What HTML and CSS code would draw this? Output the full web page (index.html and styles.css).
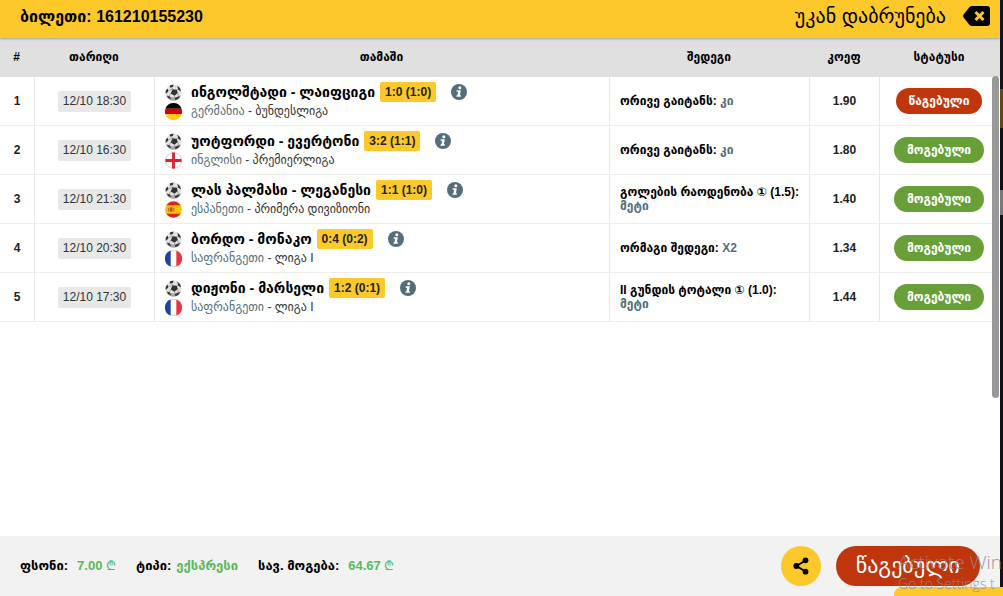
FILE: index.html
```html
<!DOCTYPE html>
<html lang="ka">
<head>
    <meta charset="UTF-8">
    <meta name="viewport" content="width=device-width, initial-scale=1.0">
    <title>ბილეთი: 161210155230</title>
    <link rel="stylesheet" href="styles.css">
</head>
<body>
    <!-- Shared icons -->
    <svg class="sprite" aria-hidden="true">
        <symbol id="ball" viewBox="0 0 18 18">
            <circle cx="9" cy="9" r="8.5" fill="#e2e2e2"/>
            <path d="M1 12a8.500 8.500 0 0 0 16 0q-8 4.500-16 0z" fill="#a5a5a5"/>
            <path d="M8 5.500l4.500 .5 1 3.500-3.500 3-4-2.500zM5 1.500l4-1L8.500 3 5.500 4zM13 1.500l3 3 1 3.500-3-2zM.8 6.500L3 5l.5 3L.7 10.500zM2 12.500l3 .5 1.500 3.500Q3 15.500 2 12.500zM10.500 15l3-1.500 2.500-.5Q14 16.800 11 17.300z" fill="#333"/>
            <path d="M8 5.500L7 3.500M12.500 6L14 6M13.500 9.500l.5 4M10 12.500l.5 2.500M6 10L4.500 13M3.500 7L8 5.500" stroke="#777" stroke-width=".6"/>
        </symbol>
        <symbol id="flag-de" viewBox="0 0 18 18">
            <path d="M.5 6a9 9 0 0 1 17 0z" fill="#000"/>
            <path d="M.5 6h17a9 9 0 0 1 0 6H.5a9 9 0 0 1 0-6z" fill="#d80000"/>
            <path d="M.5 12h17a9 9 0 0 1-17 0z" fill="#ffce00"/>
        </symbol>
        <symbol id="flag-en" viewBox="0 0 18 18">
            <circle cx="9" cy="9" r="8.500" fill="#fff" stroke="#ccc"/>
            <path d="M7.500 .5h3v7h7v3h-7v7h-3v-7h-7v-3h7z" fill="#e0202c"/>
        </symbol>
        <symbol id="flag-es" viewBox="0 0 18 18">
            <circle cx="9" cy="9" r="9" fill="#ffc400"/>
            <path d="M1.500 4.500a9 9 0 0 1 15 0zM1.500 13.500a9 9 0 0 0 15 0z" fill="#d8232a"/>
            <path d="M3 7h1v4H3zM5 6.500h3V11q-1.500 1-3 0zM9 7h1v4H9z" fill="#b5542a"/>
        </symbol>
        <symbol id="flag-fr" viewBox="0 0 18 18">
            <circle cx="9" cy="9" r="8.500" fill="#fff" stroke="#ccc"/>
            <path d="M6 .5a9 9 0 0 0 0 17z" fill="#1c4699"/>
            <path d="M12 .5a9 9 0 0 1 0 17z" fill="#e8343f"/>
        </symbol>
        <symbol id="info" viewBox="0 0 16 16">
            <circle cx="8" cy="8" r="8" fill="#546e7a"/>
            <circle cx="8.800" cy="3.800" r="1.500" fill="#fff"/>
            <path d="M5.800 6.200h4L8.900 11.200h1.100L9.700 12.700H5.400l.3-1.500h.8L7.100 7.700H5.500z" fill="#fff"/>
        </symbol>
    </svg>

    <main class="ticket">
        <header class="topbar">
            <h1>ბილეთი: 161210155230</h1>
            <button type="button" class="back">
                უკან დაბრუნება
                <svg width="27" height="20" viewBox="0 0 27 20" aria-hidden="true">
                    <path d="M9 0h15q3 0 3 3v14q0 3-3 3H9q-1.500 0-2.500-1L.6 11.500Q-.3 10 .6 8.500L6.500 1Q7.500 0 9 0z" fill="#000"/>
                    <path d="M12.500 6l8 8M20.500 6l-8 8" stroke="#fdc82a" stroke-width="3"/>
                </svg>
            </button>
        </header>

        <div class="games">
            <table>
                <thead>
                    <tr>
                        <th class="col-num">#</th>
                        <th class="col-date">თარიღი</th>
                        <th>თამაში</th>
                        <th class="col-result">შედეგი</th>
                        <th class="col-coef">კოეფ</th>
                        <th class="col-status">სტატუსი</th>
                    </tr>
                </thead>
                <tbody>
                    <tr>
                        <td class="num">1</td>
                        <td class="date"><span>12/10 18:30</span></td>
                        <td class="game">
                            <div class="teams"><svg class="icon"><use href="#ball"/></svg><b>ინგოლშტადი - ლაიფციგი</b><span class="score">1:0 (1:0)</span><button type="button" class="info" aria-label="info"><svg><use href="#info"/></svg></button></div>
                            <div class="league"><svg class="icon"><use href="#flag-de"/></svg><span><a href="#">გერმანია</a> - ბუნდესლიგა</span></div>
                        </td>
                        <td class="result">ორივე გაიტანს: <span>კი</span></td>
                        <td class="coef">1.90</td>
                        <td class="status"><span class="pill lost">წაგებული</span></td>
                    </tr>
                    <tr>
                        <td class="num">2</td>
                        <td class="date"><span>12/10 16:30</span></td>
                        <td class="game">
                            <div class="teams"><svg class="icon"><use href="#ball"/></svg><b>უოტფორდი - ევერტონი</b><span class="score">3:2 (1:1)</span><button type="button" class="info" aria-label="info"><svg><use href="#info"/></svg></button></div>
                            <div class="league"><svg class="icon"><use href="#flag-en"/></svg><span><a href="#">ინგლისი</a> - პრემიერლიგა</span></div>
                        </td>
                        <td class="result">ორივე გაიტანს: <span>კი</span></td>
                        <td class="coef">1.80</td>
                        <td class="status"><span class="pill">მოგებული</span></td>
                    </tr>
                    <tr>
                        <td class="num">3</td>
                        <td class="date"><span>12/10 21:30</span></td>
                        <td class="game">
                            <div class="teams"><svg class="icon"><use href="#ball"/></svg><b>ლას პალმასი - ლეგანესი</b><span class="score">1:1 (1:0)</span><button type="button" class="info" aria-label="info"><svg><use href="#info"/></svg></button></div>
                            <div class="league"><svg class="icon"><use href="#flag-es"/></svg><span><a href="#">ესპანეთი</a> - პრიმერა დივიზიონი</span></div>
                        </td>
                        <td class="result">გოლების რაოდენობა ① (1.5): <span>მეტი</span></td>
                        <td class="coef">1.40</td>
                        <td class="status"><span class="pill">მოგებული</span></td>
                    </tr>
                    <tr>
                        <td class="num">4</td>
                        <td class="date"><span>12/10 20:30</span></td>
                        <td class="game">
                            <div class="teams"><svg class="icon"><use href="#ball"/></svg><b>ბორდო - მონაკო</b><span class="score">0:4 (0:2)</span><button type="button" class="info" aria-label="info"><svg><use href="#info"/></svg></button></div>
                            <div class="league"><svg class="icon"><use href="#flag-fr"/></svg><span><a href="#">საფრანგეთი</a> - ლიგა I</span></div>
                        </td>
                        <td class="result">ორმაგი შედეგი: <span>X2</span></td>
                        <td class="coef">1.34</td>
                        <td class="status"><span class="pill">მოგებული</span></td>
                    </tr>
                    <tr>
                        <td class="num">5</td>
                        <td class="date"><span>12/10 17:30</span></td>
                        <td class="game">
                            <div class="teams"><svg class="icon"><use href="#ball"/></svg><b>დიჟონი - მარსელი</b><span class="score">1:2 (0:1)</span><button type="button" class="info" aria-label="info"><svg><use href="#info"/></svg></button></div>
                            <div class="league"><svg class="icon"><use href="#flag-fr"/></svg><span><a href="#">საფრანგეთი</a> - ლიგა I</span></div>
                        </td>
                        <td class="result">II გუნდის ტოტალი ① (1.0): <span>მეტი</span></td>
                        <td class="coef">1.44</td>
                        <td class="status"><span class="pill">მოგებული</span></td>
                    </tr>
                </tbody>
            </table>
            <div class="scroll-thumb"></div>
        </div>

        <footer class="summary">
            <dl>
                <div><dt>ფსონი:</dt><dd class="money">7.00 <span>₾</span></dd></div>
                <div><dt>ტიპი:</dt><dd>ექსპრესი</dd></div>
                <div><dt>სავ. მოგება:</dt><dd class="money">64.67 <span>₾</span></dd></div>
            </dl>
            <button type="button" class="share" aria-label="share">
                <svg width="16" height="18" viewBox="0 0 16 18">
                    <path d="M12.500 3.500L3.500 9l9 5.500" fill="none" stroke="#000" stroke-width="2"/>
                    <circle cx="12.500" cy="3.300" r="2.900"/>
                    <circle cx="3.300" cy="9" r="2.900"/>
                    <circle cx="12.500" cy="14.700" r="2.900"/>
                </svg>
            </button>
            <span class="pill lost big">წაგებული</span>
        </footer>
    </main>

    <div class="chat-tab"></div>
    <div class="watermark">
        <div class="watermark-title">Activate Win</div>
        <div>Go to Settings t</div>
    </div>
</body>
</html>
```
FILE: styles.css
```css
* {
    box-sizing: border-box;
}

body {
    margin: 0;
    height: 100vh;
    padding-right: 3px;
    overflow: hidden;
    position: relative;
    /* page behind the dialog */
    background: linear-gradient(#14151a 89px, #5c4a10 89px, #5c4a10 128px, #101218 128px, #101218 190px, #77787a 190px, #77787a 215px, #101218 215px);
    font-family: "Liberation Sans", "DejaVu Sans", sans-serif;
    font-size: 12px;
    color: #000;
}

button {
    border: 0;
    padding: 0;
    background: none;
    font: inherit;
    color: inherit;
    cursor: pointer;
}

.sprite {
    display: none;
}

.ticket {
    display: flex;
    flex-direction: column;
    height: 100%;
    background: #fff;
}

.topbar {
    display: flex;
    justify-content: space-between;
    align-items: center;
    height: 38px;
    flex: none;
    padding: 0 10px 6px 20px;
    background: #fdc82a;
    box-shadow: 0 1px 2px rgba(0, 0, 0, 0.3);
    position: relative;
    z-index: 1;
}

.topbar h1 {
    margin: 0;
    font-size: 16px;
}

.back {
    display: flex;
    align-items: center;
    gap: 17px;
    font-size: 20px;
}

/* Games table */
.games {
    flex: 1;
    min-height: 0;
    position: relative;
}

table {
    width: 100%;
    table-layout: fixed;
    border-collapse: separate;
    border-spacing: 0;
}

th {
    height: 39px;
    padding: 0 2px 2px 0;
    background: #e0e0e0;
    font-size: 12px;
}

.col-num { width: 35px; }
.col-date { width: 120px; }
.col-result { width: 200px; }
.col-coef { width: 70px; }
.col-status { width: 120px; }

td {
    height: 49px;
    padding: 0;
    border-right: 1px solid #e8e8e8;
    border-bottom: 1px solid #eee;
    text-align: center;
}

td:last-child {
    border-right: 0;
}

.num,
.coef {
    font-weight: bold;
    color: #222;
}

.date span {
    display: inline-block;
    padding: 0 5px;
    border-radius: 2px;
    background: #e8e8e8;
    line-height: 21px;
    color: #333;
}

.game {
    padding-left: 10px;
    text-align: left;
}

.teams,
.league {
    display: flex;
    align-items: center;
}

.teams {
    height: 20px;
    font-size: 14px;
}

.league {
    height: 18px;
    color: #333;
}

.icon {
    width: 17px;
    height: 17px;
    margin-right: 9px;
}

.league a {
    color: #546e7a;
    text-decoration: none;
}

.score {
    margin: 0 15px 0 5px;
    padding: 0 5px;
    border-radius: 2px;
    background: #fdc82a;
    font-size: 12px;
    font-weight: bold;
    line-height: 20px;
    color: #222;
}

.info svg {
    display: block;
    width: 16px;
    height: 16px;
}

.result {
    padding: 0 10px;
    text-align: left;
    font-weight: bold;
    line-height: 14px;
}

.result span {
    color: #546e7a;
}

.status {
    padding-right: 2px;
}

.pill {
    display: inline-block;
    padding: 0 13px;
    border-radius: 20px;
    background: #689f38;
    font-weight: bold;
    line-height: 26px;
    color: #fff;
}

.lost {
    background: #bf360c;
}

.scroll-thumb {
    position: absolute;
    top: 38px;
    right: 1px;
    width: 7px;
    height: 322px;
    border-radius: 4px;
    background: #999;
}

/* Bottom bar */
.summary {
    display: flex;
    align-items: center;
    flex: none;
    height: 60px;
    padding: 0 20px;
    background: #f2f2f2;
}

dl {
    display: flex;
    gap: 20px;
    flex: 1;
    margin: 0;
    font-size: 13px;
    font-weight: bold;
    line-height: 16px;
}

dl div {
    display: flex;
    align-items: baseline;
    gap: 5px;
}

dd {
    margin: 0;
    color: #5cb860;
}

.money {
    padding-left: 4px;
}

.money span {
    font-weight: normal;
}

.share {
    display: flex;
    align-items: center;
    justify-content: center;
    width: 40px;
    height: 40px;
    margin-right: 15px;
    border-radius: 50%;
    background: #fdc82a;
}

.big {
    padding: 0 20px;
    font-size: 22px;
    font-weight: normal;
    line-height: 40px;
}

.chat-tab {
    position: absolute;
    right: 0;
    bottom: 0;
    width: 109px;
    height: 9px;
    border-top-left-radius: 8px;
    background: #fdc82a;
}

.watermark {
    position: absolute;
    right: 0;
    bottom: 2px;
    width: 105px;
    font-family: "Open Sans", sans-serif;
    font-size: 14px;
    font-weight: 300;
    line-height: 20px;
    white-space: nowrap;
    color: rgba(140, 140, 140, 0.9);
}

.watermark-title {
    font-size: 19px;
    line-height: 24px;
}
```
